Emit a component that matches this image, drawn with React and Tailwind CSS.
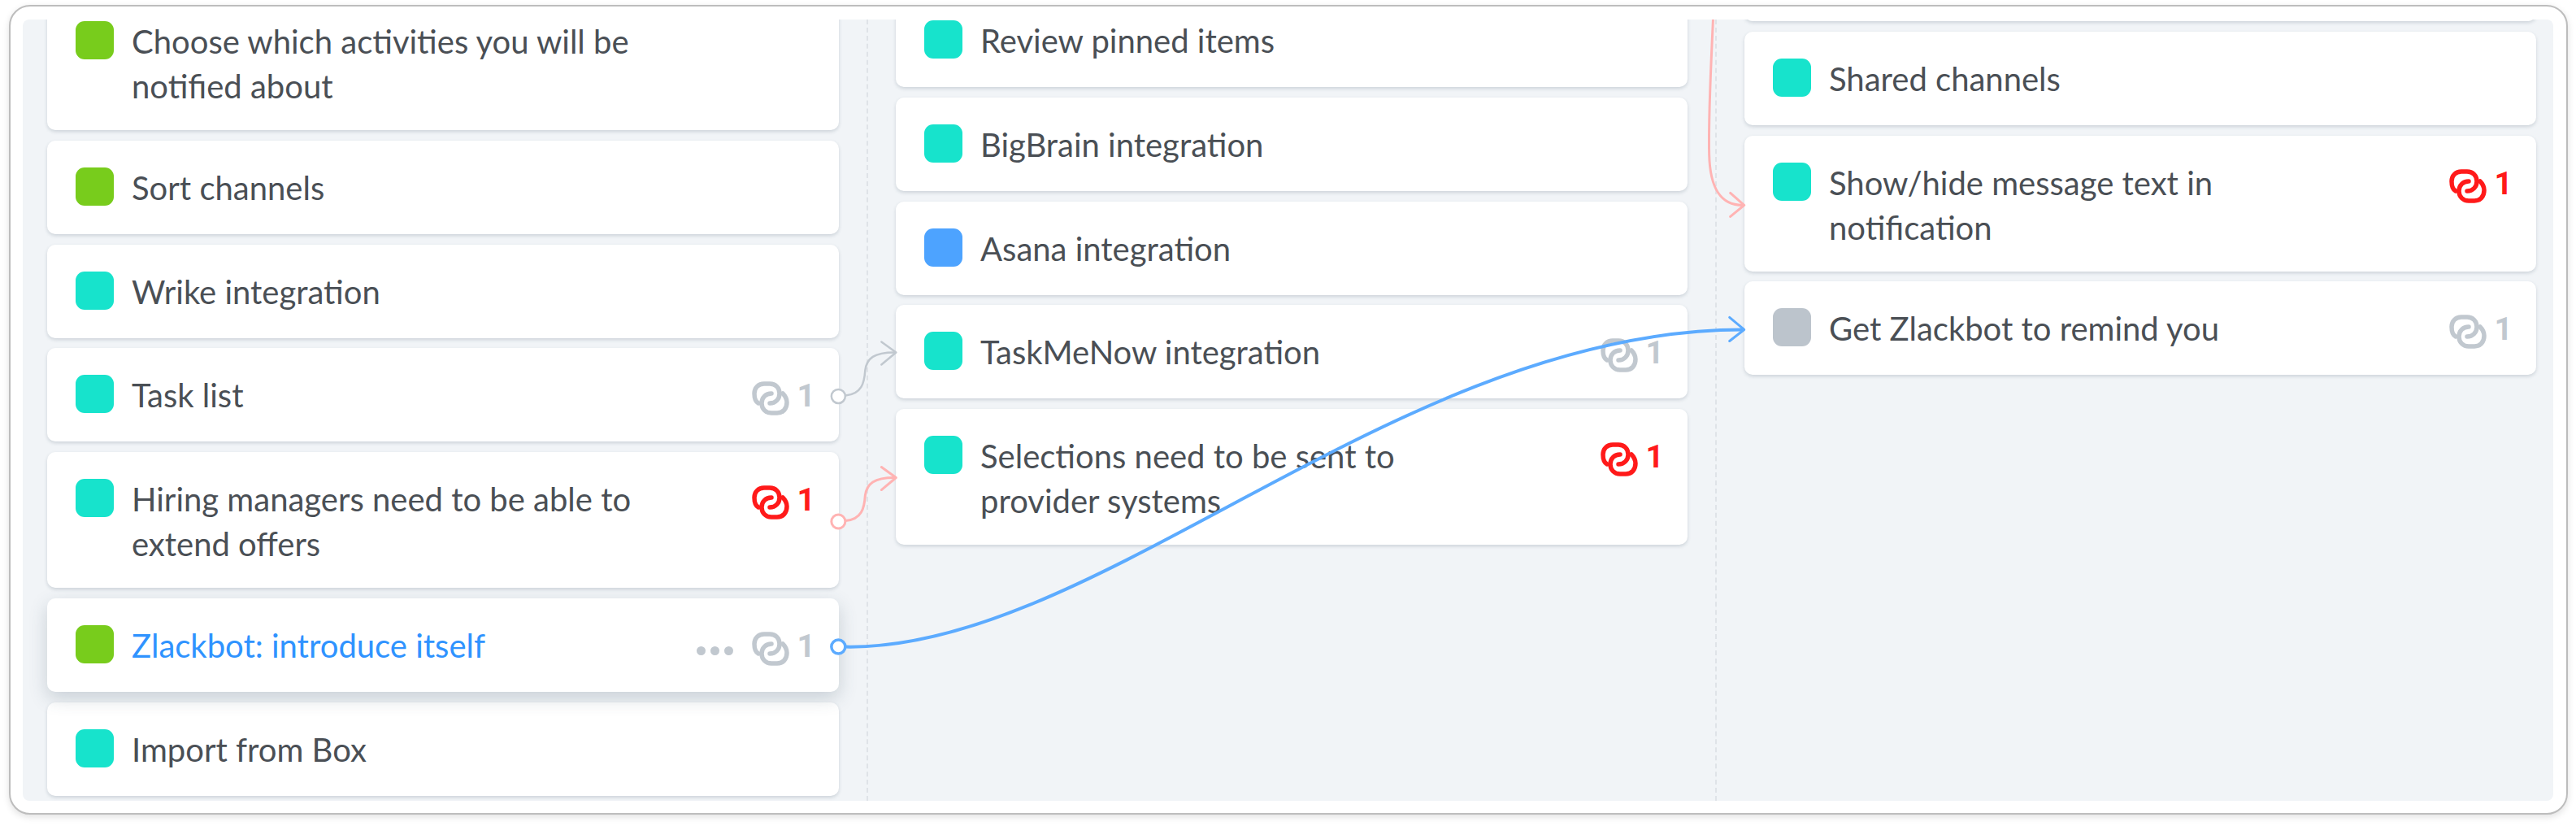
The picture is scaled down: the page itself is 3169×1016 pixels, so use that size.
import React from 'react';

const TEAL = 'bg-[#17e3cc]';
const GREEN = 'bg-[#78cc1c]';
const BLUE = 'bg-[#4da3ff]';
const GREY = 'bg-[#bcc4cc]';

const columnOne = [
  { text: 'Choose which activities you will be notified about', color: GREEN },
  { text: 'Sort channels', color: GREEN },
  { text: 'Wrike integration', color: TEAL },
  { text: 'Task list', color: TEAL, links: 'grey' },
  { text: 'Hiring managers need to be able to extend offers', color: TEAL, links: 'red' },
  { text: 'Zlackbot: introduce itself', color: GREEN, links: 'grey', active: true },
  { text: 'Import from Box', color: TEAL },
];

const columnTwo = [
  { text: 'Review pinned items', color: TEAL },
  { text: 'BigBrain integration', color: TEAL },
  { text: 'Asana integration', color: BLUE },
  { text: 'TaskMeNow integration', color: TEAL, links: 'grey' },
  { text: 'Selections need to be sent to provider systems', color: TEAL, links: 'red' },
];

const columnThree = [
  { text: '', color: '' },
  { text: 'Shared channels', color: TEAL },
  { text: 'Show/hide message text in notification', color: TEAL, links: 'red' },
  { text: 'Get Zlackbot to remind you', color: GREY, links: 'grey' },
];

const LinkIcon = ({ className }) => (
  <svg viewBox="0 0 46 42" className={className} fill="none" stroke="currentColor" strokeWidth="5.500" strokeLinecap="round">
    <path d="M8 27C4 25 3 20 3 15C3 8 8 3 15 3L22 3C29 3 34 8 34 15C34 22 29 27 22 27" />
    <path d="M38 15C41 18 43 22 43 26C43 34 38 39 31 39L24 39C17 39 12 34 12 27C12 20 17 15 24 15" />
  </svg>
);

const LinkCount = ({ tone, active }) => {
  const color = tone === 'red' ? 'text-[#ff1a1a]' : 'text-[#c1c8cf]';
  return (
    <div className="flex items-start ml-auto shrink-0 mt-[10px]">
      {active && (
        <div className="flex gap-[6px] mt-[18px] mr-[23px]">
          <span className="w-[11px] h-[11px] rounded-full bg-[#c1c8cf]" />
          <span className="w-[11px] h-[11px] rounded-full bg-[#c1c8cf]" />
          <span className="w-[11px] h-[11px] rounded-full bg-[#c1c8cf]" />
        </div>
      )}
      <LinkIcon className={`w-[46px] h-[42px] ${color}`} />
      <span className={`ml-[10px] mt-[1px] font-['Roboto',sans-serif] text-[39px] leading-[34px] font-bold ${color}`}>1</span>
    </div>
  );
};

const Card = ({ item }) => (
  <div
    className={`flex items-start min-h-[115px] bg-white rounded-[10px] pt-[31px] pb-[26px] pl-[35px] pr-[29px] ${
      item.active ? 'relative z-10 shadow-[0_8px_22px_rgba(60,80,100,0.22)]' : 'shadow-[0_2px_4px_rgba(60,80,100,0.2)]'
    }`}
  >
    {item.color && <span className={`w-[47px] h-[47px] mt-[2px] rounded-[11px] shrink-0 ${item.color}`} />}
    {item.text && (
      <p className={`ml-[22px] max-w-[650px] text-[40px] leading-[55px] ${item.active ? 'text-[#2f93ff]' : 'text-[#4a4f55]'}`}>
        {item.text}
      </p>
    )}
    {item.links && <LinkCount tone={item.links} active={item.active} />}
  </div>
);

// connector lines between cards, coordinates are page pixels
const Connectors = () => (
  <svg className="absolute inset-0 z-20 w-full h-full pointer-events-none" viewBox="28 24 3112 960" fill="none" strokeWidth="2.500" strokeLinecap="round" strokeLinejoin="round">
    <g stroke="#c1c8cf">
      <path d="M1040 486C1060 484 1063 470 1064 455C1066 440 1075 433 1100 433" />
      <path d="M1084 420L1102 433L1084 448" />
      <circle cx="1031" cy="487" r="8.500" fill="#fff" />
    </g>
    <g stroke="#ffb3b3" strokeWidth="3">
      <path d="M1040 640C1060 638 1063 624 1064 609C1066 594 1075 587 1100 587" />
      <path d="M1084 574L1102 587L1084 602" />
      <circle cx="1031" cy="641" r="8.500" fill="#fff" />
      <path d="M2107 20C2103 100 2101 150 2102 190C2103 230 2115 252 2143 252" />
      <path d="M2128 237L2145 252L2128 266" />
    </g>
    <g stroke="#5cabff">
      <path strokeWidth="4" d="M1040 795C1350 800 1720 405 2143 405" />
      <path strokeWidth="3" d="M2127 390L2145 405L2127 419" />
      <circle strokeWidth="3.500" cx="1031" cy="795" r="8.500" fill="#fff" />
    </g>
  </svg>
);

export default function App() {
  return (
    <div className="w-[3169px] h-[1016px] bg-white pt-[6px] pl-[11px] font-['Lato',sans-serif] overflow-hidden">
      <div className="w-[3148px] h-[996px] border-2 border-[#bdbdbd] rounded-[26px] bg-white pt-[16px] pl-[15px] pr-[16px] pb-[15px] shadow-[0_3px_8px_rgba(0,0,0,0.12)]">
        <div className="relative flex h-full bg-[#f1f4f7] rounded-[8px] overflow-hidden">
          <div className="w-[1040px] shrink-0 pl-[30px] pr-[34px] border-r-2 border-dashed border-[#dfe3e8]">
            <div className="flex flex-col gap-[12.800px] -mt-[31px]">
              {columnOne.map((item, i) => <Card key={i} item={item} />)}
            </div>
          </div>
          <div className="w-[1044px] shrink-0 pl-[34px] pr-[34px] border-r-2 border-dashed border-[#dfe3e8]">
            <div className="flex flex-col gap-[12.800px] -mt-[32px]">
              {columnTwo.map((item, i) => <Card key={i} item={item} />)}
            </div>
          </div>
          <div className="flex-1 pl-[34px] pr-[21px]">
            <div className="flex flex-col gap-[12.800px] -mt-[113px]">
              {columnThree.map((item, i) => <Card key={i} item={item} />)}
            </div>
          </div>
          <Connectors />
        </div>
      </div>
    </div>
  );
}
